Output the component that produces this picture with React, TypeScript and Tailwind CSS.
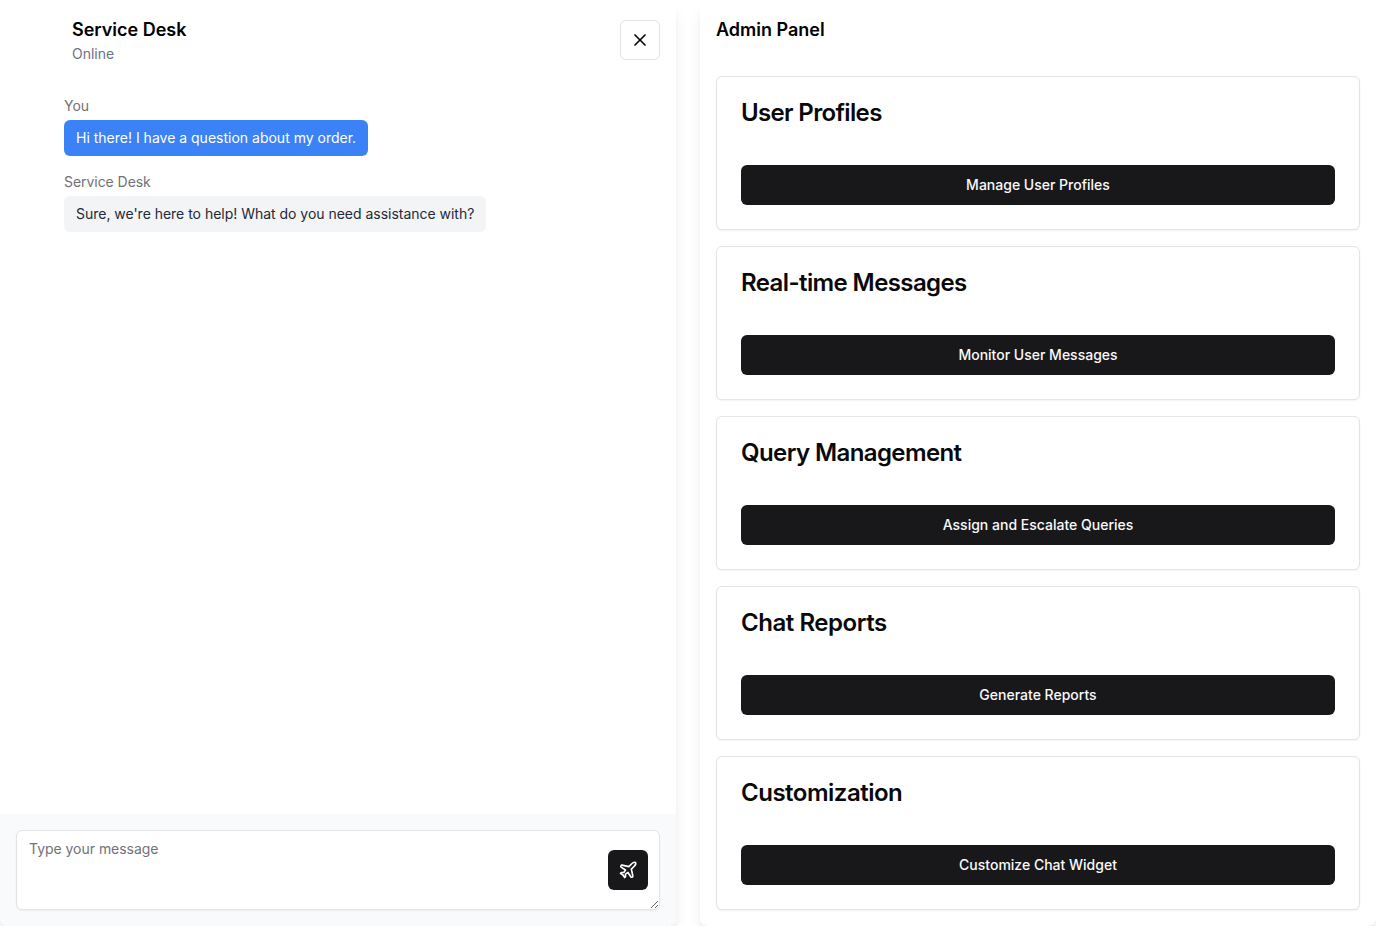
import { Plane, X } from "lucide-react";

const cards = [
  { title: "User Profiles", action: "Manage User Profiles", tracking: "tracking-[-0.65px]" },
  { title: "Real-time Messages", action: "Monitor User Messages", tracking: "tracking-tight" },
  { title: "Query Management", action: "Assign and Escalate Queries", tracking: "tracking-tight" },
  { title: "Chat Reports", action: "Generate Reports", tracking: "tracking-[-0.45px]" },
  { title: "Customization", action: "Customize Chat Widget", tracking: "tracking-[-0.5px]" },
];

export default function App() {
  return (
    <div className="grid h-[926px] grid-cols-2 gap-6 overflow-hidden bg-white font-['Inter',sans-serif] text-[#09090b]">
      <div className="flex flex-col rounded-lg bg-white shadow-lg">
        <div className="flex items-start justify-between p-4 pt-5 pb-0">
          <div className="-mt-1 ml-14">
            <h2 className="text-lg leading-7 font-semibold text-black">Service Desk</h2>
            <p className="text-sm text-[#6b7280]">Online</p>
          </div>
          <button aria-label="Close" className="flex size-10 items-center justify-center rounded-md border border-[#e4e4e7] bg-white">
            <X className="size-5" />
          </button>
        </div>
        <div className="flex flex-1 flex-col items-start gap-4 pt-8 pl-16 text-sm">
          <div>
            <p className="text-[#71717a]">You</p>
            <div className="mt-1 rounded-md bg-[#3b82f6] px-3 py-2 text-white">Hi there! I have a question about my order.</div>
          </div>
          <div>
            <p className="tracking-[-0.05px] text-[#71717a]">Service Desk</p>
            <div className="mt-1 w-[422px] rounded-md bg-[#f2f4f6] px-3 py-2 tracking-[-0.02px] whitespace-nowrap text-[#1f2937]">
              Sure, we're here to help! What do you need assistance with?
            </div>
          </div>
        </div>
        <div className="rounded-b-lg bg-[#f9fafb] p-4">
          <div className="relative h-20">
            <textarea
              placeholder="Type your message"
              className="block h-20 w-full rounded-md border border-[#e4e4e7] bg-white px-3 py-2 text-sm tracking-[-0.03px] shadow-xs placeholder:text-[#71717a]"
            />
            <button aria-label="Send" className="absolute top-5 right-3 flex size-10 items-center justify-center rounded-md bg-[#18181b] text-white">
              <Plane className="size-5" />
            </button>
          </div>
        </div>
      </div>
      <div className="rounded-lg bg-white p-4 shadow-lg">
        <h2 className="mb-8 text-lg leading-7 font-semibold text-black">Admin Panel</h2>
        <div className="grid gap-4">
          {cards.map(({ title, action, tracking }) => (
            <div key={title} className="h-[154px] rounded-md border border-[#e4e4e7] bg-white px-6 pt-6 shadow-xs">
              <h3 className={`text-2xl leading-6 font-semibold ${tracking}`}>{title}</h3>
              <button className="mt-10 flex h-10 w-full items-center justify-center rounded-md bg-[#18181b] text-sm font-medium text-[#fafafa]">
                {action}
              </button>
            </div>
          ))}
        </div>
      </div>
    </div>
  );
}
